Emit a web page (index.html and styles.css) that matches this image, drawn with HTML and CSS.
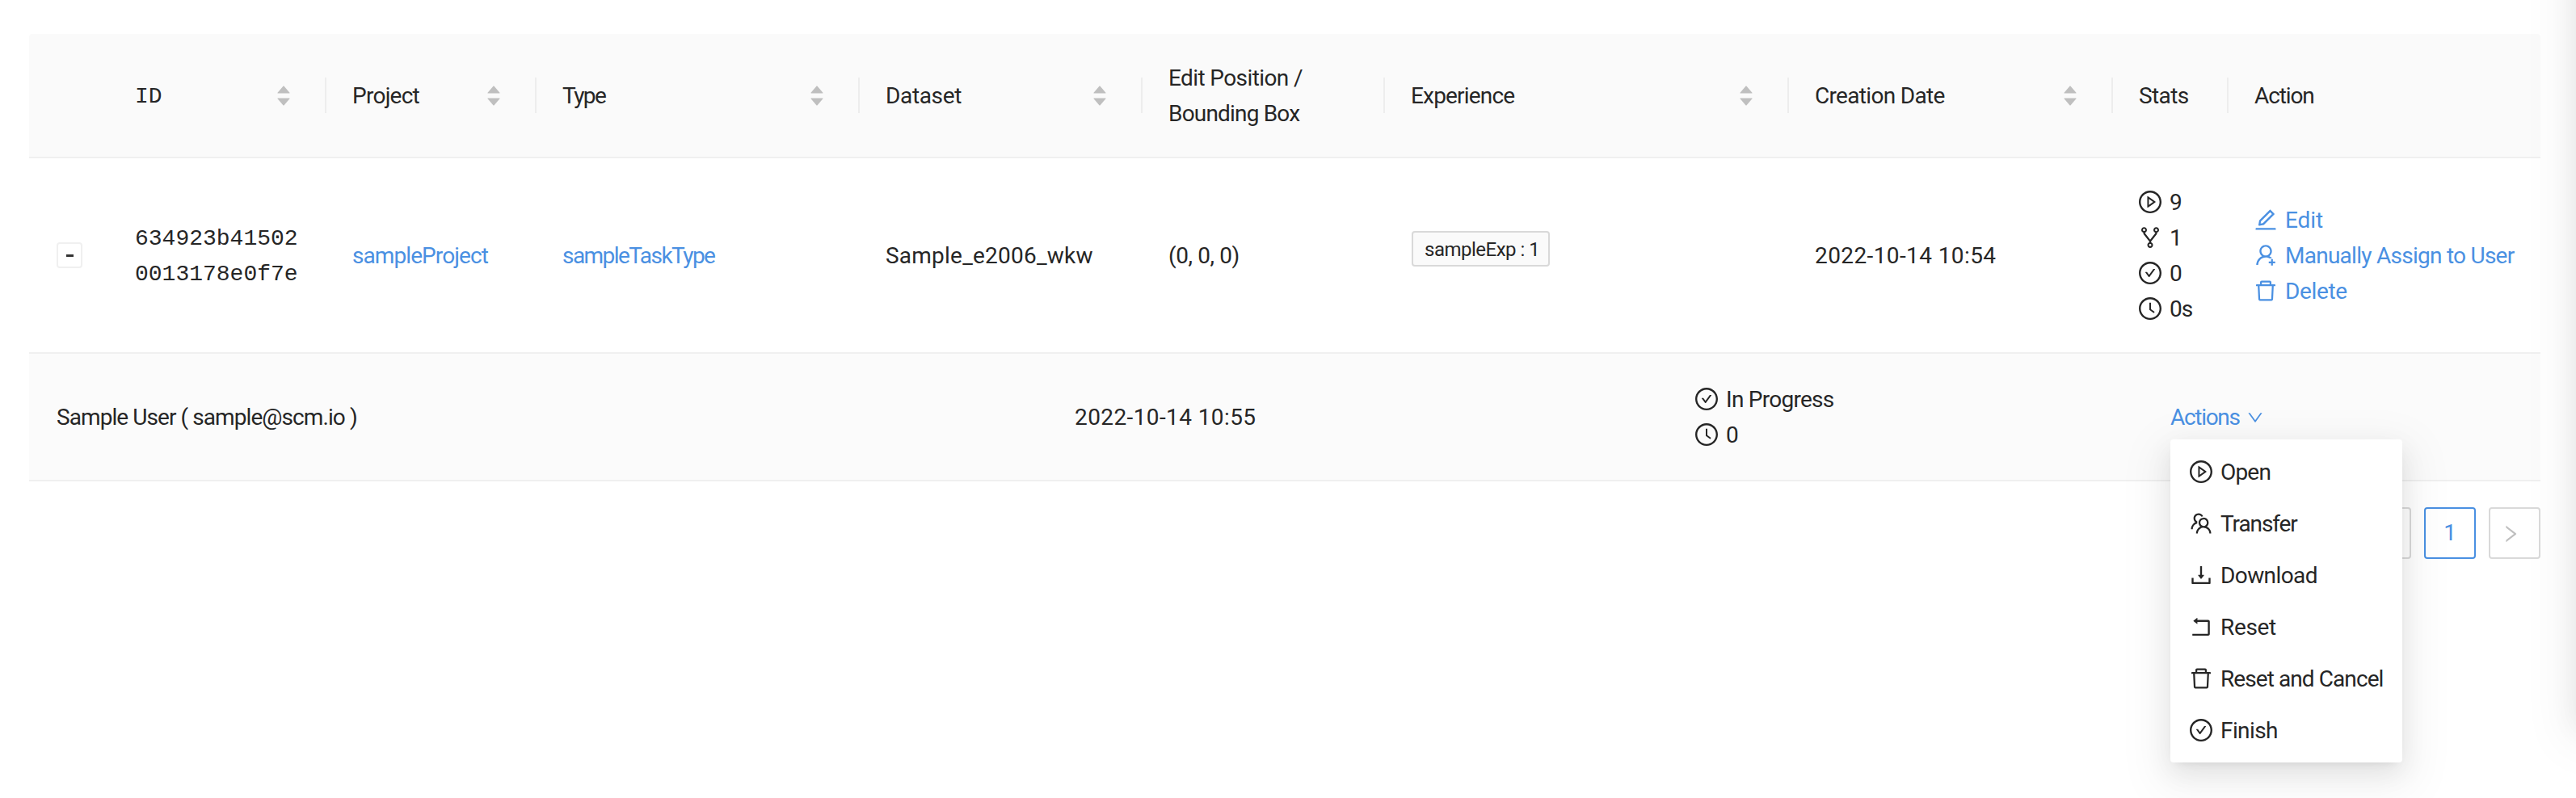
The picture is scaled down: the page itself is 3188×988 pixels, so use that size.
FILE: index.html
```
<!DOCTYPE html>
<html lang="en">
<head>
<meta charset="utf-8">
<title>Tasks</title>
<link rel="stylesheet" href="styles.css">
</head>
<body>
<svg class="sprite" xmlns="http://www.w3.org/2000/svg">
  <symbol id="circle" viewBox="64 64 896 896"><path d="M512 64C264.6 64 64 264.6 64 512s200.6 448 448 448 448-200.6 448-448S759.4 64 512 64zm0 820c-205.4 0-372-166.6-372-372s166.6-372 372-372 372 166.6 372 372-166.6 372-372 372z"/></symbol>
  <symbol id="play" viewBox="64 64 896 896"><use href="#circle" x="64" y="64" width="896" height="896"/><path d="M719.4 499.1l-296.1-215A15.9 15.9 0 00398 297v430c0 13.1 14.8 20.5 25.3 12.9l296.1-215a15.9 15.9 0 000-25.8zm-257.6 134V390.9L628.5 512 461.8 633.1z"/></symbol>
  <symbol id="check" viewBox="64 64 896 896"><use href="#circle" x="64" y="64" width="896" height="896"/><path d="M699 353h-46.9c-10.2 0-19.9 4.9-25.9 13.3L469 584.3l-71.2-98.8c-6-8.3-15.6-13.3-25.9-13.3H325c-6.5 0-10.3 7.4-6.5 12.7l124.6 172.8a31.8 31.8 0 0051.7 0l210.6-292c3.9-5.3.1-12.7-6.4-12.7z"/></symbol>
  <symbol id="clock" viewBox="64 64 896 896"><use href="#circle" x="64" y="64" width="896" height="896"/><path d="M686.7 638.6L544.1 535.5V288c0-4.4-3.6-8-8-8H488c-4.4 0-8 3.6-8 8v275.4c0 2.6 1.2 5 3.3 6.5l165.4 120.6c3.6 2.6 8.6 1.8 11.2-1.7l28.6-39c2.6-3.7 1.8-8.7-1.8-11.2z"/></symbol>
  <symbol id="fork" viewBox="64 64 896 896"><path d="M752 100c-61.8 0-112 50.2-112 112 0 47.7 29.9 88.5 72 104.6v27.6L512 601.4 312 344.2v-27.6c42.1-16.1 72-56.9 72-104.6 0-61.8-50.2-112-112-112s-112 50.2-112 112c0 50.6 33.8 93.5 80 107.3v34.4c0 9.7 3.3 19.3 9.3 27L476 672.3v33.6c-44.2 15-76 56.9-76 106.1 0 61.8 50.2 112 112 112s112-50.2 112-112c0-49.2-31.8-91-76-106.1v-33.6l226.7-291.6c6-7.7 9.3-17.3 9.3-27v-34.4c46.2-13.8 80-56.7 80-107.3 0-61.8-50.2-112-112-112zM224 212a48.01 48.01 0 0196 0 48.01 48.01 0 01-96 0zm336 600a48.01 48.01 0 01-96 0 48.01 48.01 0 0196 0zm192-552a48.01 48.01 0 010-96 48.01 48.01 0 010 96z"/></symbol>
  <symbol id="edit" viewBox="64 64 896 896"><path d="M257.7 752c2 0 4-.2 6-.5L431.9 722c2-.4 3.9-1.3 5.3-2.8l423.9-423.9a9.96 9.96 0 000-14.1L694.9 114.9c-1.9-1.9-4.4-2.9-7.1-2.9s-5.2 1-7.1 2.9L256.8 538.8c-1.5 1.5-2.4 3.3-2.8 5.3l-29.5 168.2a33.5 33.5 0 009.4 29.8c6.6 6.4 14.9 9.9 23.8 9.9zm67.4-174.4L687.8 215l73.3 73.3-362.7 362.6-88.9 15.7 15.6-89zM880 836H144c-17.7 0-32 14.3-32 32v36c0 4.4 3.6 8 8 8h784c4.4 0 8-3.6 8-8v-36c0-17.7-14.3-32-32-32z"/></symbol>
  <symbol id="user-add" viewBox="64 64 896 896"><path d="M678.3 642.4c24.2-13 51.9-20.4 81.4-20.4h.1c3 0 4.4-3.6 2.2-5.6a371.67 371.67 0 00-103.7-65.8c-.4-.2-.8-.3-1.2-.5C719.2 505 759.6 431.7 759.6 349c0-137-110.8-248-247.5-248S264.7 212 264.7 349c0 82.7 40.4 156 102.6 201.1-.4.2-.8.3-1.2.5-44.7 18.9-84.8 46-119.3 80.6a373.42 373.42 0 00-80.4 119.5A373.6 373.6 0 00137 888.8a8 8 0 008 8.2h59.9c4.3 0 7.9-3.5 8-7.8 2-77.2 32.9-149.5 87.6-204.3C357 628.2 432.2 597 512.2 597c56.7 0 111.1 15.7 158 45.1a8.1 8.1 0 008.1.3zM512.2 521c-45.8 0-88.9-17.9-121.4-50.4A171.2 171.2 0 01340.5 349c0-45.9 17.9-89.1 50.3-121.6S466.3 177 512.2 177s88.9 17.9 121.4 50.4A171.2 171.2 0 01683.9 349c0 45.9-17.9 89.1-50.3 121.6C601.1 503.1 558 521 512.2 521zM880 759h-84v-84c0-4.4-3.6-8-8-8h-56c-4.4 0-8 3.6-8 8v84h-84c-4.4 0-8 3.6-8 8v56c0 4.4 3.6 8 8 8h84v84c0 4.4 3.6 8 8 8h56c4.4 0 8-3.6 8-8v-84h84c4.4 0 8-3.6 8-8v-56c0-4.4-3.6-8-8-8z"/></symbol>
  <symbol id="trash" viewBox="64 64 896 896"><path d="M360 184h-8c4.4 0 8-3.6 8-8v8h304v-8c0 4.4 3.6 8 8 8h-8v72h72v-80c0-35.3-28.7-64-64-64H352c-35.3 0-64 28.7-64 64v80h72v-72zm504 72H160c-17.7 0-32 14.3-32 32v32c0 4.4 3.6 8 8 8h60.4l24.7 523c1.6 34.1 29.8 61 63.9 61h454c34.2 0 62.3-26.8 63.9-61l24.7-523H888c4.4 0 8-3.6 8-8v-32c0-17.7-14.3-32-32-32zM731.3 840H292.7l-24.2-512h487l-24.2 512z"/></symbol>
  <symbol id="team" viewBox="64 64 896 896"><path d="M824.2 699.9a301.55 301.55 0 00-86.4-60.4C783.1 602.8 812 546.8 812 484c0-110.8-92.4-201.7-203.2-200-109.1 1.7-197 90.6-197 200 0 62.8 29 118.8 74.2 155.5a300.95 300.95 0 00-86.4 60.4C345 754.6 314 826.8 312 903.8a8 8 0 008 8.2h56c4.3 0 7.9-3.4 8-7.7 1.9-58 25.4-112.3 66.7-153.5A226.62 226.62 0 01612 684c60.9 0 118.2 23.7 161.3 66.8C814.6 792 838 846.3 840 904.3c.1 4.3 3.7 7.7 8 7.7h56a8 8 0 008-8.2c-2-77-33-149.2-87.8-203.9zM612 612c-34.2 0-66.4-13.3-90.5-37.5a126.86 126.86 0 01-37.5-91.8c.3-32.8 13.4-64.5 36.3-88 24-24.6 56.1-38.3 90.4-38.7 33.9-.3 66.8 12.9 91 36.6 24.8 24.3 38.4 56.8 38.4 91.4 0 34.2-13.3 66.3-37.5 90.5A127.3 127.3 0 01612 612zM361.5 510.4c-.9-8.7-1.4-17.5-1.4-26.4 0-15.9 1.5-31.4 4.3-46.5.7-3.6-1.2-7.3-4.5-8.8-13.6-6.1-26.1-14.5-36.9-25.1a127.54 127.54 0 01-38.7-95.4c.9-32.1 13.8-62.6 36.3-85.6 24.7-25.3 57.9-39.1 93.2-38.7 31.9.3 62.7 12.6 86 34.4 7.9 7.4 14.7 15.6 20.4 24.4 2 3.1 5.9 4.4 9.3 3.2 17.6-6.1 36.2-10.4 55.3-12.4 5.6-.6 8.8-6.6 6.3-11.6-32.5-64.3-98.9-108.7-175.7-109.9-110.9-1.7-203.3 89.2-203.3 199.9 0 62.8 28.9 118.8 74.2 155.5-31.8 14.7-61.1 35-86.5 60.4-54.8 54.7-85.8 126.9-87.8 204a8 8 0 008 8.2h56.1c4.3 0 7.9-3.4 8-7.7 1.9-58 25.4-112.3 66.7-153.5 29.4-29.4 65.4-49.8 104.7-59.7 3.9-1 6.5-4.7 6-8.7z"/></symbol>
  <symbol id="download" viewBox="64 64 896 896"><path d="M505.7 661a8 8 0 0012.6 0l112-141.7c4.1-5.2.4-12.9-6.3-12.9h-74.1V168c0-4.4-3.6-8-8-8h-60c-4.4 0-8 3.6-8 8v338.3H400c-6.7 0-10.4 7.7-6.3 12.9l112 141.8zM878 626h-60c-4.4 0-8 3.6-8 8v154H214V634c0-4.4-3.6-8-8-8h-60c-4.4 0-8 3.6-8 8v198c0 17.7 14.3 32 32 32h684c17.7 0 32-14.3 32-32V634c0-4.4-3.6-8-8-8z"/></symbol>
  <symbol id="rollback" viewBox="64 64 896 896"><path d="M793 242H366v-74c0-6.7-7.7-10.4-12.9-6.3l-142 112a8 8 0 000 12.6l142 112c5.2 4.1 12.9.4 12.9-6.3v-74h415v470H175c-4.4 0-8 3.6-8 8v60c0 4.4 3.6 8 8 8h618c35.3 0 64-28.7 64-64V306c0-35.3-28.7-64-64-64z"/></symbol>
  <symbol id="down" viewBox="64 64 896 896"><path d="M884 256h-75c-5.1 0-9.9 2.5-12.9 6.6L512 654.2 227.9 262.6c-3-4.1-7.8-6.6-12.9-6.6h-75c-6.5 0-10.3 7.4-6.5 12.7l352.6 486.1c12.8 17.6 39 17.6 51.7 0l352.6-486.1c3.9-5.3.1-12.7-6.4-12.7z"/></symbol>
  <symbol id="right" viewBox="64 64 896 896"><path d="M765.7 486.8L314.9 134.7A7.97 7.97 0 00302 141v77.3c0 4.9 2.3 9.6 6.1 12.6l360 281.1-360 281.1c-3.9 3-6.1 7.7-6.1 12.6V883c0 6.7 7.7 10.4 12.9 6.3l450.8-352.1a31.96 31.96 0 000-50.4z"/></symbol>
  <symbol id="caret-up" viewBox="0 0 1024 1024"><path d="M858.9 689L530.5 308.2c-9.4-10.9-27.5-10.9-37 0L165.1 689c-12.2 14.2-1.2 35 18.5 35h656.8c19.7 0 30.7-20.8 18.5-35z"/></symbol>
  <symbol id="caret-down" viewBox="0 0 1024 1024"><path d="M840.4 300H183.6c-19.7 0-30.7 20.8-18.5 35l328.5 380.8c9.4 10.9 27.5 10.9 37 0L858.9 335c12.2-14.2 1.2-35-18.5-35z"/></symbol>
</svg>

<main class="page">
  <section class="table">
    <div class="row head">
      <div class="cell"></div>
      <div class="cell split mono"><span>ID</span><span class="sorter"><svg><use href="#caret-up"/></svg><svg><use href="#caret-down"/></svg></span></div>
      <div class="cell split"><span class="h-project">Project</span><span class="sorter"><svg><use href="#caret-up"/></svg><svg><use href="#caret-down"/></svg></span></div>
      <div class="cell split"><span class="h-type">Type</span><span class="sorter"><svg><use href="#caret-up"/></svg><svg><use href="#caret-down"/></svg></span></div>
      <div class="cell split"><span class="h-dataset">Dataset</span><span class="sorter"><svg><use href="#caret-up"/></svg><svg><use href="#caret-down"/></svg></span></div>
      <div class="cell split"><span><span class="h-position">Edit Position /</span><br><span class="h-box">Bounding Box</span></span></div>
      <div class="cell split"><span class="h-experience">Experience</span><span class="sorter"><svg><use href="#caret-up"/></svg><svg><use href="#caret-down"/></svg></span></div>
      <div class="cell split"><span class="h-created">Creation Date</span><span class="sorter"><svg><use href="#caret-up"/></svg><svg><use href="#caret-down"/></svg></span></div>
      <div class="cell split"><span class="h-stats">Stats</span></div>
      <div class="cell"><span class="h-action">Action</span></div>
    </div>

    <div class="row">
      <div class="cell"><button class="expander" aria-label="Collapse row"><span class="minus"></span></button></div>
      <div class="cell mono">634923b41502<br>0013178e0f7e</div>
      <div class="cell"><a class="link t-project">sampleProject</a></div>
      <div class="cell"><a class="link t-type">sampleTaskType</a></div>
      <div class="cell"><span class="t-dataset">Sample_e2006_wkw</span></div>
      <div class="cell"><span class="t-position">(0, 0, 0)</span></div>
      <div class="cell"><span class="tag">sampleExp : 1</span></div>
      <div class="cell"><span class="date">2022-10-14 10:54</span></div>
      <div class="cell list">
        <div class="item"><svg class="icon"><use href="#play"/></svg><span>9</span></div>
        <div class="item"><svg class="icon"><use href="#fork"/></svg><span>1</span></div>
        <div class="item"><svg class="icon"><use href="#check"/></svg><span>0</span></div>
        <div class="item"><svg class="icon"><use href="#clock"/></svg><span class="t-time">0s</span></div>
      </div>
      <div class="cell list">
        <a class="item link"><svg class="icon"><use href="#edit"/></svg><span class="l-edit">Edit</span></a>
        <a class="item link"><svg class="icon"><use href="#user-add"/></svg><span class="l-assign">Manually Assign to User</span></a>
        <a class="item link"><svg class="icon"><use href="#trash"/></svg><span class="l-delete">Delete</span></a>
      </div>
    </div>

    <div class="row nested">
      <div class="cell"><span class="n-user">Sample User ( sample@scm.io )</span></div>
      <div class="cell"><span class="date">2022-10-14 10:55</span></div>
      <div class="cell list">
        <div class="item"><svg class="icon"><use href="#check"/></svg><span class="n-progress">In Progress</span></div>
        <div class="item"><svg class="icon"><use href="#clock"/></svg><span>0</span></div>
      </div>
      <div class="cell">
        <div class="dropdown">
          <a class="link trigger"><span class="n-actions">Actions</span><svg><use href="#down"/></svg></a>
          <div class="menu">
            <div class="option"><svg class="icon"><use href="#play"/></svg><span class="m-open">Open</span></div>
            <div class="option"><svg class="icon"><use href="#team"/></svg><span class="m-transfer">Transfer</span></div>
            <div class="option"><svg class="icon"><use href="#download"/></svg><span class="m-download">Download</span></div>
            <div class="option"><svg class="icon"><use href="#rollback"/></svg><span class="m-reset">Reset</span></div>
            <div class="option"><svg class="icon"><use href="#trash"/></svg><span class="m-cancel">Reset and Cancel</span></div>
            <div class="option"><svg class="icon"><use href="#check"/></svg><span class="m-finish">Finish</span></div>
          </div>
        </div>
      </div>
    </div>
  </section>

  <nav class="pagination">
    <button class="pager"></button>
    <button class="pager current">1</button>
    <button class="pager"><svg><use href="#right"/></svg></button>
  </nav>
  <div class="side-panel"></div>
</main>
</body>
</html>
```

FILE: styles.css
```
* { box-sizing: border-box; }
body {
  margin: 0;
  background: #fff;
  color: #262626;
  font: 28px/44px Roboto, sans-serif;
}
svg { fill: currentColor; flex: none; display: block; }
.sprite { width: 0; height: 0; position: absolute; }
.page {
  position: relative;
  height: 988px;
  padding: 42px 44px 0 36px;
  overflow: hidden;
}

/* Table */
.row {
  display: grid;
  grid-template-columns: 100px 268px 260px 400px 350px 300px 500px 401px 143px 386px;
  border-bottom: 2px solid #f0f0f0;
}
.row > .cell { height: 240px; }
.cell {
  display: flex;
  align-items: center;
  padding: 2px 32px 0;
  white-space: nowrap;
  min-width: 0;
}
.row > .cell:first-child { padding-left: 34px; }
.row.head { background: #fafafa; border-radius: 4px 4px 0 0; }
.row.head > .cell { height: 152px; }
.split {
  justify-content: space-between;
  background: linear-gradient(#ededed, #ededed) right center / 2px 44px no-repeat;
}
.row > .mono { padding: 4px 32px 0 31px; font-family: "Liberation Mono", monospace; }
.sorter {
  display: flex;
  flex-direction: column;
  margin: -2px 10px 0 0;
  color: #bfbfbf;
}
.sorter svg { width: 22px; height: 22px; }
.sorter svg + svg { margin-top: -7px; }
.mono .sorter { margin-top: -4px; }
.list { flex-direction: column; align-items: flex-start; justify-content: center; }
.item { display: flex; align-items: center; gap: 10px; height: 44px; }
.item .icon { margin-top: -3px; }
.icon { width: 28px; height: 28px; }
.link { color: #4a90e2; }
.expander {
  display: grid;
  place-items: center;
  width: 32px;
  height: 32px;
  margin-top: -2px;
  padding: 0;
  border: 2px solid #f0f0f0;
  border-radius: 4px;
  background: #fff;
}
.minus { width: 9px; height: 3px; background: #333; }
.tag {
  width: 171px;
  height: 44px;
  margin: 0 0 18px 1px;
  padding: 0 14px;
  border: 2px solid #d9d9d9;
  border-radius: 4px;
  background: #fafafa;
  font-size: 24px;
  line-height: 42px;
  letter-spacing: -0.5px;
}

/* Nested annotation row */
.row.nested {
  grid-template-columns: 1262px 768px 588px 490px;
  background: #fbfbfb;
}
.nested > .cell { height: 156px; }
.dropdown { position: relative; }
.trigger { display: flex; align-items: center; gap: 9px; }
.trigger svg { width: 20px; height: 20px; }
.menu {
  position: absolute;
  z-index: 2;
  top: 49px;
  left: 0;
  width: 287px;
  padding: 8px 0;
  border-radius: 4px;
  background: #fff;
}
.menu, .side-panel {
  box-shadow: 0 6px 12px -8px rgba(0, 0, 0, .12), 0 12px 32px rgba(0, 0, 0, .08), 0 18px 56px 16px rgba(0, 0, 0, .05);
}
.option {
  display: flex;
  align-items: center;
  gap: 10px;
  height: 64px;
  padding: 0 24px;
}
.option span { padding-top: 1px; }

/* Pagination */
.pagination {
  display: flex;
  justify-content: flex-end;
  gap: 16px;
  margin-top: 32px;
}
.pager {
  display: grid;
  place-items: center;
  width: 64px;
  height: 64px;
  padding: 0;
  border: 2px solid #d9d9d9;
  border-radius: 4px;
  background: #fff;
  color: #bfbfbf;
  font: inherit;
}
.pager.current { border-color: #4a90e2; color: #4a90e2; }
.pager svg { width: 24px; height: 24px; margin: 2px 10px 0 0; }
.side-panel {
  position: absolute;
  top: -100px;
  left: 3190px;
  width: 300px;
  height: 988px;
}

/* Tracking per label */
.h-project, .n-progress { letter-spacing: -0.74px; }
.h-type, .t-type { letter-spacing: -1.56px; }
.h-dataset, .l-delete, .m-reset { letter-spacing: -0.36px; }
.h-position, .m-finish, .h-stats { letter-spacing: -0.6px; }
.h-box, .h-experience { letter-spacing: -0.82px; }
.h-created { letter-spacing: -0.67px; }
.h-action { letter-spacing: -1.11px; }
.t-project, .m-cancel { letter-spacing: -0.92px; }
.t-dataset { letter-spacing: 0.23px; }
.t-position { letter-spacing: -0.4px; }
.t-time { letter-spacing: -1.1px; }
.date { letter-spacing: 0.4px; }
.l-edit { letter-spacing: -0.08px; }
.l-assign { letter-spacing: -0.74px; }
.n-user { letter-spacing: -0.92px; }
.n-actions { letter-spacing: -1.3px; }
.m-open { letter-spacing: -0.81px; }
.m-transfer { letter-spacing: -1.1px; }
.m-download { letter-spacing: -0.6px; }
```
